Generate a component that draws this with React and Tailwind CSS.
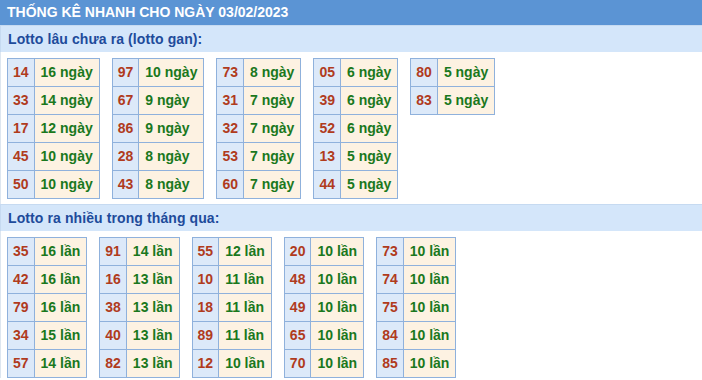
import React from 'react';

const ganTables = [
  [['14', '16 ngày'], ['33', '14 ngày'], ['17', '12 ngày'], ['45', '10 ngày'], ['50', '10 ngày']],
  [['97', '10 ngày'], ['67', '9 ngày'], ['86', '9 ngày'], ['28', '8 ngày'], ['43', '8 ngày']],
  [['73', '8 ngày'], ['31', '7 ngày'], ['32', '7 ngày'], ['53', '7 ngày'], ['60', '7 ngày']],
  [['05', '6 ngày'], ['39', '6 ngày'], ['52', '6 ngày'], ['13', '5 ngày'], ['44', '5 ngày']],
  [['80', '5 ngày'], ['83', '5 ngày']],
];

const hotTables = [
  [['35', '16 lần'], ['42', '16 lần'], ['79', '16 lần'], ['34', '15 lần'], ['57', '14 lần']],
  [['91', '14 lần'], ['16', '13 lần'], ['38', '13 lần'], ['40', '13 lần'], ['82', '13 lần']],
  [['55', '12 lần'], ['10', '11 lần'], ['18', '11 lần'], ['89', '11 lần'], ['12', '10 lần']],
  [['20', '10 lần'], ['48', '10 lần'], ['49', '10 lần'], ['65', '10 lần'], ['70', '10 lần']],
  [['73', '10 lần'], ['74', '10 lần'], ['75', '10 lần'], ['84', '10 lần'], ['85', '10 lần']],
];

// một bảng nhỏ: cột số + cột giá trị
const MiniTable = ({ rows }) => (
  <div className="grid grid-cols-[auto_auto] border-l border-t border-[#8fb1dc]">
    {rows.map(([num, val]) => (
      <React.Fragment key={num}>
        <div className="h-[28px] flex items-center justify-center px-[5px] bg-[#dce9f9] text-[#b03b1d] border-r border-b border-[#8fb1dc]">
          {num}
        </div>
        <div className="h-[28px] flex items-center px-[6px] bg-[#fdf2e2] text-[#1a781d] border-r border-b border-[#8fb1dc]">
          {val}
        </div>
      </React.Fragment>
    ))}
  </div>
);

const SectionTitle = ({ children }) => (
  <div className="h-[27px] flex items-center pl-[7px] bg-[#d4e6fa] border-l border-t border-[#c6daf1] text-[#1e4b9b] text-[14px] font-bold tracking-[0.1px]">
    {children}
  </div>
);

const App = () => {
  return (
    <div className="w-[702px] h-[380px] bg-white overflow-hidden font-['Liberation_Sans',Arial,sans-serif]">
      {/* tiêu đề chính */}
      <div className="h-[25px] flex items-center pl-[7px] bg-[#5b94d4] text-white text-[14px] font-bold">
        THỐNG KÊ NHANH CHO NGÀY 03/02/2023
      </div>

      <SectionTitle>Lotto lâu chưa ra (lotto gan):</SectionTitle>
      <div className="flex items-start gap-[12px] pl-[6px] pt-[6px] pb-[5px] text-[14px] font-bold border-l border-[#dde6f0]">
        {ganTables.map((rows, i) => (
          <MiniTable key={i} rows={rows} />
        ))}
      </div>

      <SectionTitle>Lotto ra nhiều trong tháng qua:</SectionTitle>
      <div className="flex items-start gap-[12px] pl-[6px] pt-[6px] text-[14px] font-bold border-l border-[#dde6f0]">
        {hotTables.map((rows, i) => (
          <MiniTable key={i} rows={rows} />
        ))}
      </div>
    </div>
  );
};

export default App;
